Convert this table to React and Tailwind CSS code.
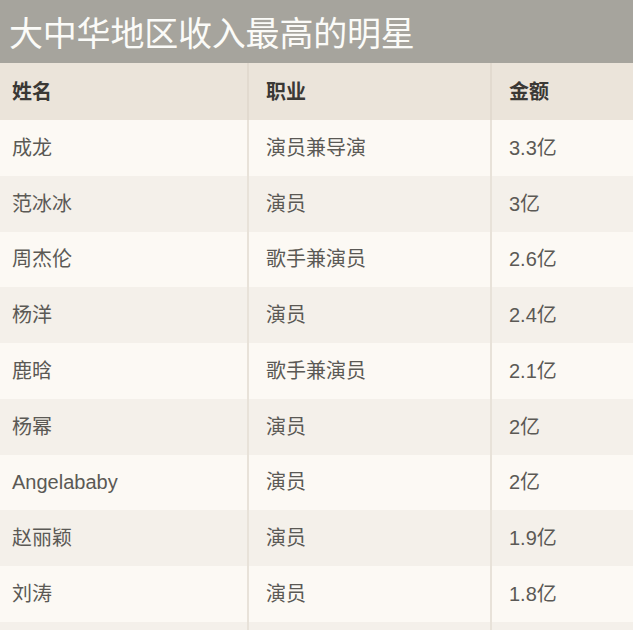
import React from "react";

const rows = [
  ["成龙", "演员兼导演", "3.3亿"],
  ["范冰冰", "演员", "3亿"],
  ["周杰伦", "歌手兼演员", "2.6亿"],
  ["杨洋", "演员", "2.4亿"],
  ["鹿晗", "歌手兼演员", "2.1亿"],
  ["杨幂", "演员", "2亿"],
  ["Angelababy", "演员", "2亿"],
  ["赵丽颖", "演员", "1.9亿"],
  ["刘涛", "演员", "1.8亿"],
  ["", "", ""],
];

export default function App() {
  const font = { fontFamily: '"Liberation Sans", "Noto Sans CJK SC", sans-serif' };
  return (
    <div className="w-[633px] h-[630px] overflow-hidden bg-[#fcf9f4]" style={font}>
      <div className="h-[63px] bg-[#a6a49d] flex items-center pl-[9px]">
        <span className="text-[34px] leading-none text-[#fbfbf8] tracking-[-0.2px]" style={{ fontFamily: '"Noto Sans CJK SC", sans-serif' }}>
          大中华地区收入最高的明星
        </span>
      </div>
      <div className="grid grid-cols-[249px_243px_141px] h-[57px] bg-[#ebe4da] text-[20px] font-bold text-[#3a3835]">
        <div className="flex items-center pl-[12px] border-r-2 border-[#e2dacf]">姓名</div>
        <div className="flex items-center pl-[17px] border-r-2 border-[#e2dacf]">职业</div>
        <div className="flex items-center pl-[17px]">金额</div>
      </div>
      {rows.map((r, i) => (
        <div
          key={i}
          className={`grid grid-cols-[249px_243px_141px] h-[55.75px] text-[20px] text-[#5b5955] ${i % 2 === 0 ? "bg-[#fcf9f4]" : "bg-[#f4f0ea]"}`}
        >
          <div className="flex items-center pl-[12px] border-r-2 border-[#e8e2d9]">{r[0]}</div>
          <div className="flex items-center pl-[17px] border-r-2 border-[#e8e2d9]">{r[1]}</div>
          <div className="flex items-center pl-[17px]">{r[2]}</div>
        </div>
      ))}
    </div>
  );
}
